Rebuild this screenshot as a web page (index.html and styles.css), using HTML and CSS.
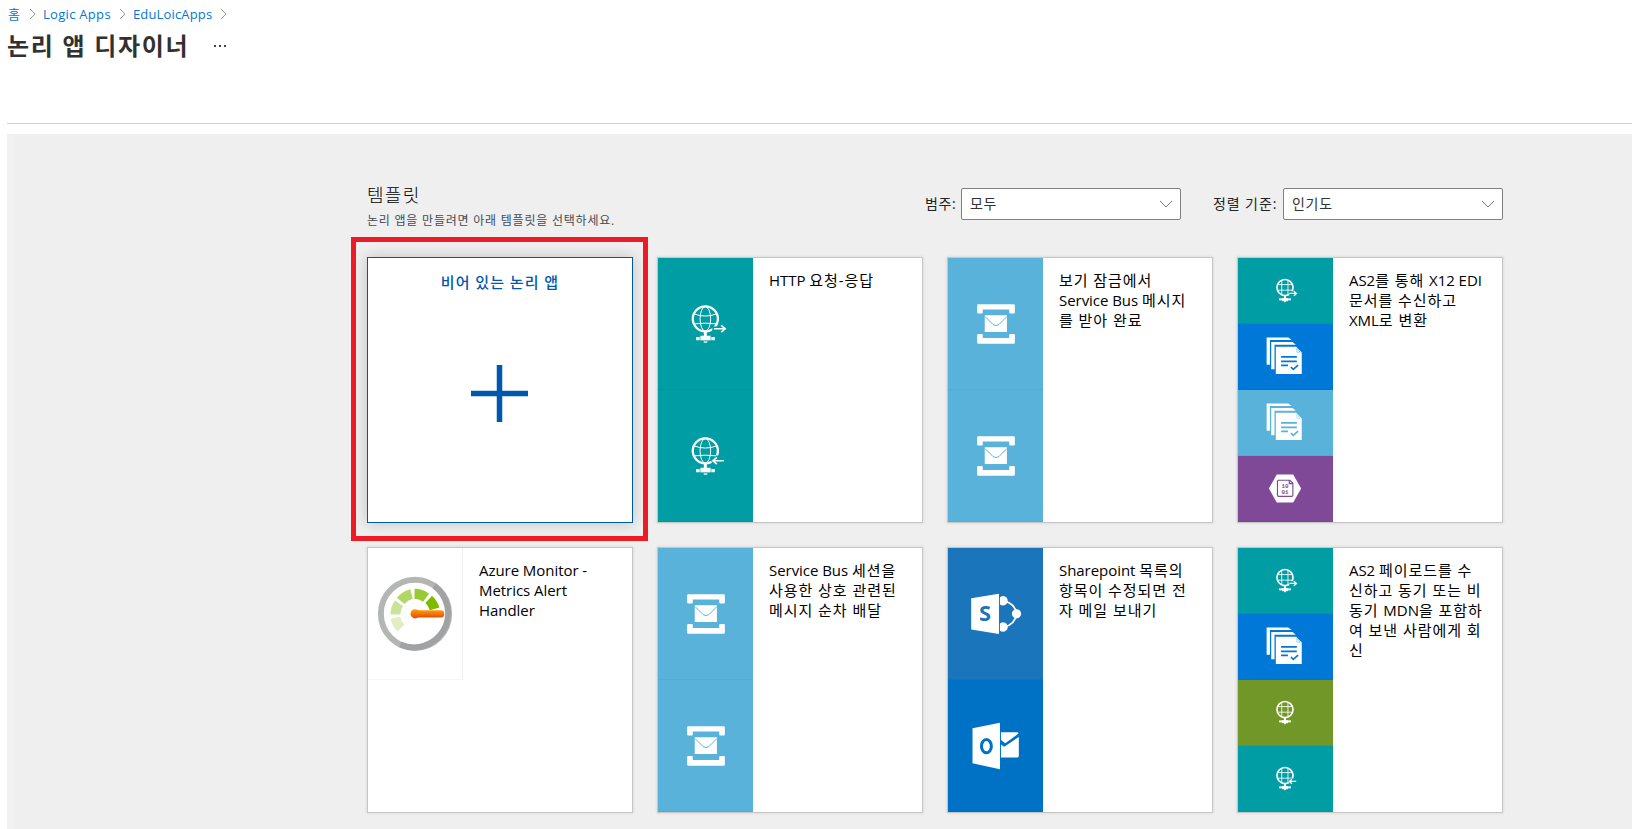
FILE: index.html
```
<!DOCTYPE html>
<html lang="ko">
<head>
<meta charset="utf-8">
<title>논리 앱 디자이너</title>
<link rel="stylesheet" href="styles.css">
</head>
<body>
<svg class="defs" aria-hidden="true">
  <defs>
    <linearGradient id="needle" x1="0" y1="0" x2="0" y2="1"><stop offset="0" stop-color="#ff9a1a"/><stop offset=".5" stop-color="#f87400"/><stop offset="1" stop-color="#d94f00"/></linearGradient>
    <g id="globe" fill="none" stroke="#fff">
      <circle cx="166" cy="208" r="38" stroke-width="7"/>
      <ellipse cx="166" cy="208" rx="16" ry="37" stroke-width="3"/>
      <path d="M132 193q34 13 68 0M132 223q34 -4 68 0" stroke-width="3"/>
      <path d="M166 246v14" stroke-width="9"/>
      <path d="M151 266h31" stroke-width="14"/>
      <path d="M138 268h11M184 268h11" stroke-width="10"/>
      <path d="M161 278h11" stroke-width="4"/>
    </g>
    <symbol id="out" viewBox="24 24 285 396">
      <use href="#globe"/>
      <path class="knock" d="M187 231h32v14h-32z"/>
      <path d="M192 238h33M214 228l12 10-12 10" fill="none" stroke="#fff" stroke-width="5"/>
    </symbol>
    <symbol id="in" viewBox="24 24 285 396">
      <use href="#globe"/>
      <path class="knock" d="M183 238l16-16h16v30h-24z"/>
      <path d="M222 238h-33M201 228l-12 10 12 10" fill="none" stroke="#fff" stroke-width="5"/>
    </symbol>
    <g id="globe-s" fill="none" stroke="#fff">
      <circle cx="165" cy="114" r="24.5" stroke-width="5"/>
      <path d="M155 92v43M174 92v43M143 105h45M143 122h45" stroke-width="2.6"/>
      <path d="M165 138v10" stroke-width="6"/>
      <path d="M147 150h36" stroke-width="6"/>
      <path d="M156 151h18" stroke-width="9"/>
      <path d="M162 157h6" stroke-width="3"/>
    </g>
    <symbol id="out-s" viewBox="24 24 285 198">
      <use href="#globe-s"/>
      <path class="knock" d="M178 125h18v12h-18z"/>
      <path d="M179 132h21M192 125l8 7-8 7" fill="none" stroke="#fff" stroke-width="4"/>
    </symbol>
    <symbol id="in-s" viewBox="24 24 285 198">
      <use href="#globe-s"/>
      <path class="knock" d="M174 132l8-9h10v17h-12z"/>
      <path d="M199 132h-21M186 125l-8 7 8 7" fill="none" stroke="#fff" stroke-width="4"/>
    </symbol>
    <symbol id="web-s" viewBox="24 24 285 198"><use href="#globe-s"/></symbol>
    <symbol id="bus" viewBox="24 24 285 396">
      <path fill="#fff" d="M114 164h108q3 0 3 3v22q0 3-3 3h-11q-3 0-3-3v-9h-80v9q0 3-3 3h-11q-3 0-3-3v-22q0-3 3-3zM114 283h108q3 0 3-3v-23q0-3-3-3h-11q-3 0-3 3v9h-80v-9q0-3-3-3h-11q-3 0-3 3v23q0 3 3 3zM134 197h67v51h-67z"/>
      <path d="M135 201l24 24q9 7 18 0l24-24" fill="none" stroke="#59b2d9" stroke-width="3"/>
    </symbol>
    <symbol id="docs" viewBox="24 222 285 198">
      <path fill="#fff" d="M109 263h66l10 8h-66v75h-10zM123 277h65l10 8h-65v75h-10zM137 291h62l17 18v65h-79z"/>
      <path class="ink" d="M201 296v12h10z" stroke="none"/>
      <path class="ink" d="M153 322h48M153 336h48M153 348h21M183 353l7 7 15-13" stroke-width="5"/>
    </symbol>
    <symbol id="hex" viewBox="24 618 285 198">
      <path fill="#fff" d="M140 674h50l24 43-24 43h-50l-24-43z"/>
      <path d="M144 692h36l9 9v36q0 4-4 4h-39q-4 0-4-4v-43zM178 692v10h10" fill="none" stroke="#804998" stroke-width="3.5"/>
      <text x="154" y="715" class="bits">10</text><text x="154" y="734" class="bits">01</text>
    </symbol>
    <symbol id="gauge" viewBox="24 24 285 396">
      <circle cx="166.500" cy="223" r="103.500" fill="none" stroke="#b3b6b5" stroke-width="18"/>
      <path d="M225 138A103.500 103.500 0 0 1 122 316" fill="none" stroke="#a0a2a4" stroke-width="18"/>
      <g fill="none" stroke-width="30">
        <path d="M107 235A61 61 0 0 0 124 266" stroke="#e1eec2"/>
        <path d="M107 225A61 61 0 0 1 118 191" stroke="#cae398"/>
        <path d="M123 184A61 61 0 0 1 156 163" stroke="#b2d766"/>
        <path d="M165 162A61 61 0 0 1 200 174" stroke="#98ca33"/>
        <path d="M208 179A61 61 0 0 1 226 208" stroke="#7dba00"/>
      </g>
      <rect x="160" y="212" width="95" height="22" rx="10" fill="url(#needle)"/>
      <circle cx="167" cy="223" r="14" fill="url(#needle)"/>
    </symbol>
    <symbol id="sharepoint" viewBox="24 24 285 396">
      <path fill="#fff" d="M93 176l84-14v122l-84-14z"/>
      <path d="M192 184q34 8 38 39q-4 32-38 40" fill="none" stroke="#fff" stroke-width="5"/>
      <g fill="#fff"><path d="M180 173q11-8 20 1q8 12-2 21q-9 6-18 0z"/><path d="M180 252q11-8 20 1q8 12-2 21q-9 6-18 0z"/><circle cx="230" cy="223" r="14"/></g>
      <text x="117" y="246" class="sp">S</text>
    </symbol>
    <symbol id="outlook" viewBox="24 420 285 396">
      <path fill="#fff" d="M97 566l83-17v141l-83-18z"/>
      <path fill="#fff" d="M183 578h49q4 0 4 4l-40 29-13-10zM183 615l10 7 44-30v58q0 4-4 4h-50z"/>
      <ellipse cx="139" cy="620" rx="15" ry="20" fill="none" stroke="#0072c6" stroke-width="9"/>
    </symbol>
    <symbol id="down" viewBox="0 0 14 8"><path d="M1 1l6 6 6-6" fill="none" stroke="#777" stroke-width="1"/></symbol>
    <symbol id="next" viewBox="0 0 7 12"><path d="M1 1l5 5-5 5" fill="none" stroke="#999" stroke-width="1"/></symbol>
  </defs>
</svg>

<header class="header">
  <nav class="crumbs">
    <a class="crumb home">홈</a><svg class="sep"><use href="#next"/></svg>
    <a class="crumb logic">Logic Apps</a><svg class="sep"><use href="#next"/></svg>
    <a class="crumb edu">EduLoicApps</a><svg class="sep"><use href="#next"/></svg>
  </nav>
  <div class="title-row"><h1 class="title">논리 앱 디자이너</h1><svg class="more" viewBox="0 0 12 2"><path d="M0 0h2v2H0zM5 0h2v2H5zM10 0h2v2h-2z" fill="#444"/></svg></div>
</header>

<main class="designer">
  <div class="toolbar">
    <div class="heading">
      <h2 class="heading-title">템플릿</h2>
      <p class="heading-sub">논리 앱을 만들려면 아래 템플릿을 선택하세요.</p>
    </div>
    <label class="label">범주:</label>
    <div class="select"><span class="value">모두</span><svg class="arrow"><use href="#down"/></svg></div>
    <label class="label sort">정렬 기준:</label>
    <div class="select"><span class="value">인기도</span><svg class="arrow"><use href="#down"/></svg></div>
  </div>

  <div class="grid">
    <div class="cell">
      <div class="card blank">
        <div class="blank-title">비어 있는 논리 앱</div>
        <svg class="plus" viewBox="0 0 57 57"><path d="M28.500 0v57M0 28.500h57" stroke="#0058ad" stroke-width="5.500"/></svg>
      </div>
      <div class="highlight"></div>
    </div>
    <div class="card">
      <div class="tiles"><svg class="tile teal"><use href="#out"/></svg><svg class="tile teal"><use href="#in"/></svg></div>
      <div class="name"><i>HTTP </i>요청-응답</div>
    </div>
    <div class="card">
      <div class="tiles"><svg class="tile sky"><use href="#bus"/></svg><svg class="tile sky"><use href="#bus"/></svg></div>
      <div class="name">보기 잠금에서<br><i>Service Bus </i>메시지<br>를 받아 완료</div>
    </div>
    <div class="card">
      <div class="tiles"><svg class="tile teal"><use href="#out-s"/></svg><svg class="tile blue"><use href="#docs"/></svg><svg class="tile sky"><use href="#docs"/></svg><svg class="tile purple"><use href="#hex"/></svg></div>
      <div class="name"><i>AS2</i>를 통해 <i>X12 EDI</i><br>문서를 수신하고<br><i>XML</i>로 변환</div>
    </div>
    <div class="card">
      <div class="tiles half"><svg class="tile white"><use href="#gauge"/></svg></div>
      <div class="name"><i>Azure Monitor -<br>Metrics Alert<br>Handler</i></div>
    </div>
    <div class="card">
      <div class="tiles"><svg class="tile sky"><use href="#bus"/></svg><svg class="tile sky"><use href="#bus"/></svg></div>
      <div class="name"><i>Service Bus </i>세션을<br>사용한 상호 관련된<br>메시지 순차 배달</div>
    </div>
    <div class="card">
      <div class="tiles"><svg class="tile share"><use href="#sharepoint"/></svg><svg class="tile mail"><use href="#outlook"/></svg></div>
      <div class="name"><i>Sharepoint </i>목록의<br>항목이 수정되면 전<br>자 메일 보내기</div>
    </div>
    <div class="card">
      <div class="tiles"><svg class="tile teal"><use href="#out-s"/></svg><svg class="tile blue"><use href="#docs"/></svg><svg class="tile green"><use href="#web-s"/></svg><svg class="tile teal"><use href="#in-s"/></svg></div>
      <div class="name"><i>AS2 </i>페이로드를 수<br>신하고 동기 또는 비<br>동기 <i>MDN</i>을 포함하<br>여 보낸 사람에게 회<br>신</div>
    </div>
  </div>
</main>
</body>
</html>
```

FILE: styles.css
```
* { box-sizing: border-box; }
body {
  margin: 0;
  height: 829px;
  overflow: hidden;
  display: flex;
  flex-direction: column;
  background: #fff;
  font-family: "Open Sans", "Noto Sans CJK KR", sans-serif;
}
.defs { position: absolute; width: 0; height: 0; }

.header {
  height: 124px;
  margin-left: 7px;
  border-bottom: 1px solid #d2d2d2;
  flex: none;
}
.crumbs { display: flex; align-items: center; height: 28px; padding-left: 1px; }
.crumb { color: #0078d4; font-size: 13px; line-height: 20px; white-space: nowrap; }
.home { width: 21px; }
.logic { width: 76px; letter-spacing: 0.3px; }
.edu { width: 87px; letter-spacing: 0.15px; }
.sep { width: 7px; height: 12px; margin-right: 7px; flex: none; }
.title-row { display: flex; align-items: center; height: 36px; }
.title {
  margin: 0;
  width: 207px;
  font-size: 24px;
  line-height: 36px;
  font-weight: 700;
  letter-spacing: 1.7px;
  color: #323130;
  white-space: nowrap;
}
.more { width: 12px; height: 2px; }

.designer {
  flex: 1;
  margin: 10px 0 0 7px;
  border-left: 8px solid #f1f1f1;
  background: #efefef;
  padding: 46px 0 0 352px;
}
.toolbar { display: flex; width: 1136px; height: 77px; }
.heading { width: 558px; }
.heading-title { margin: 0; padding-top: 1px; font-size: 18px; line-height: 28px; font-weight: 300; letter-spacing: 1.3px; color: #000; }
.heading-sub { margin: 2px 0 0; font-size: 12px; line-height: 20px; letter-spacing: 0.78px; color: #444b52; white-space: nowrap; }
.label { width: 36px; margin-top: 8px; font-size: 14px; line-height: 32px; letter-spacing: 0.6px; color: #222; white-space: nowrap; }
.sort { width: 70px; margin-left: 32px; letter-spacing: 0.9px; }
.select {
  width: 220px;
  height: 32px;
  margin-top: 8px;
  padding: 0 7px 0 8px;
  display: flex;
  align-items: center;
  justify-content: space-between;
  background: #fff;
  border: 1px solid #808080;
  border-radius: 2px;
  font-size: 14px;
  letter-spacing: 0.7px;
  color: #333;
  flex: none;
}
.value { padding-bottom: 2px; }
.arrow { width: 14px; height: 8px; }

.grid { display: grid; grid-template-columns: repeat(4, 266px); gap: 24px; }
.cell { position: relative; }
.card {
  height: 266px;
  display: flex;
  background: #fff;
  border: 1px solid #c6c6c6;
  box-shadow: 0 0 3px rgba(0, 0, 0, 0.12);
}
.blank {
  flex-direction: column;
  align-items: center;
  border-color: #0058ad;
  box-shadow: 0 0 14px rgba(0, 0, 0, 0.2);
}
.blank-title { margin-top: 12px; font-size: 15px; line-height: 24px; font-weight: 500; letter-spacing: 1px; color: #0058ad; }
.plus { width: 57px; height: 57px; margin: 71px 1px 0 0; }
.highlight {
  position: absolute;
  left: -16px;
  top: -20px;
  width: 297px;
  height: 304px;
  border: 5px solid #ed1c24;
}

.tiles { width: 95px; display: flex; flex-direction: column; flex: none; }
.tile { display: block; width: 95px; flex: 1; min-height: 0; border-bottom: 1px solid rgba(0, 0, 0, 0.04); }
.half { height: 132px; }
.teal { background: #009da5; color: #009da5; }
.sky { background: #59b2d9; color: #59b2d9; }
.blue { background: #0078d7; color: #0078d7; }
.purple { background: #804998; color: #804998; }
.green { background: #709727; color: #709727; }
.share { background: #1b75bb; }
.mail { background: #0072c6; }
.white { border-right: 1px solid #f0f0f0; }
.knock { fill: #009da5; }
.ink { fill: none; stroke: currentColor; }
.bits { font: 700 18px "Liberation Mono", monospace; fill: #804998; }
.sp { font: 700 66px "Open Sans", sans-serif; fill: #1b75bb; }

.name {
  padding: 12px 0 0 16px;
  font-size: 15px;
  line-height: 20px;
  letter-spacing: 0.95px;
  color: #000;
  white-space: nowrap;
}
.name i { font-style: normal; line-height: 0; letter-spacing: -0.05px; }
```
